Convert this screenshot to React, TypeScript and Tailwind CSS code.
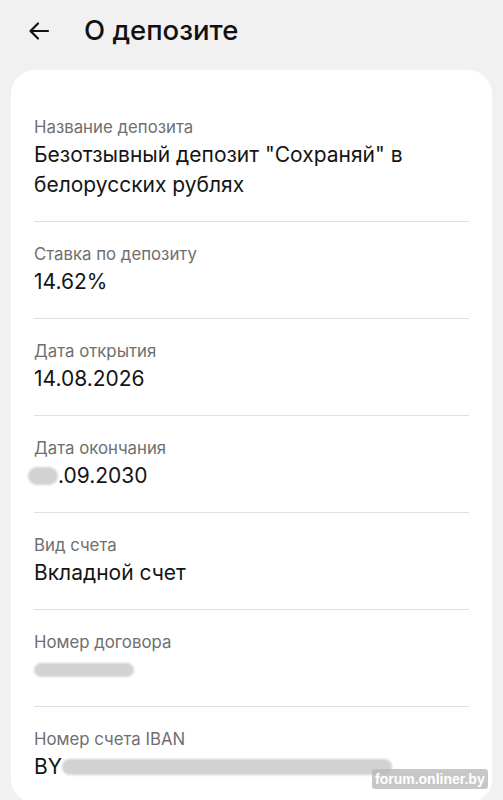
import React from 'react';

const Blob = ({ className }: { className: string }) => (
  <span className={`inline-block rounded-full bg-[#d2d2d2] blur-[1px] ${className}`} />
);

const Row = ({ label, children, last }: { label: string; children: React.ReactNode; last?: boolean }) => (
  <div className={`py-[21px] ${last ? '' : 'border-b border-[#e0e0e0]'}`}>
    <p className="text-[16.8px] leading-[22px] text-[#6f6f6f]">{label}</p>
    <div className="mt-[2px] min-h-[30px] text-[21px] leading-[30px] text-[#151515]">{children}</div>
  </div>
);

export default function App() {
  return (
    <div className="relative h-[800px] overflow-hidden bg-[#f1f1f1] font-['Inter','Noto_Sans',sans-serif]">
      <div className="flex h-[62px] items-center pl-[27px]">
        <svg width="24" height="24" viewBox="0 0 24 24" fill="none" stroke="#111" strokeWidth="2.2" strokeLinecap="round" strokeLinejoin="round">
          <path d="M21 12H3.5M11 4.5 3.5 12l7.5 7.5" />
        </svg>
        <h1 className="ml-[33px] text-[27.5px] font-medium text-[#111]">О депозите</h1>
      </div>

      <div className="mx-[11px] mt-[8px] rounded-[24px] bg-white px-[23px] pt-[25px]">
        <Row label="Название депозита">
          <p className="leading-[30px]">Безотзывный депозит "Сохраняй" в белорусских рублях</p>
        </Row>
        <Row label="Ставка по депозиту">14.62%</Row>
        <Row label="Дата открытия">14.08.2026</Row>
        <Row label="Дата окончания">
          <div className="flex h-[30px] items-center">
            <Blob className="-ml-[6px] h-[18px] w-[30px]" />
            <span>.09.2030</span>
          </div>
        </Row>
        <Row label="Вид счета">Вкладной счет</Row>
        <Row label="Номер договора">
          <div className="flex h-[30px] items-center">
            <Blob className="h-[14px] w-[100px]" />
          </div>
        </Row>
        <Row label="Номер счета IBAN" last>
          <div className="flex h-[30px] items-center">
            <span>BY</span>
            <Blob className="h-[16px] w-[330px]" />
          </div>
        </Row>
      </div>

      <div className="absolute left-[372px] top-[769px] rounded-[3px] bg-[#b9b9b9]/80 px-[3px] font-['Liberation_Sans',sans-serif] text-[14px] font-bold leading-[20px] text-white">
        forum.onliner.by
      </div>
    </div>
  );
}
